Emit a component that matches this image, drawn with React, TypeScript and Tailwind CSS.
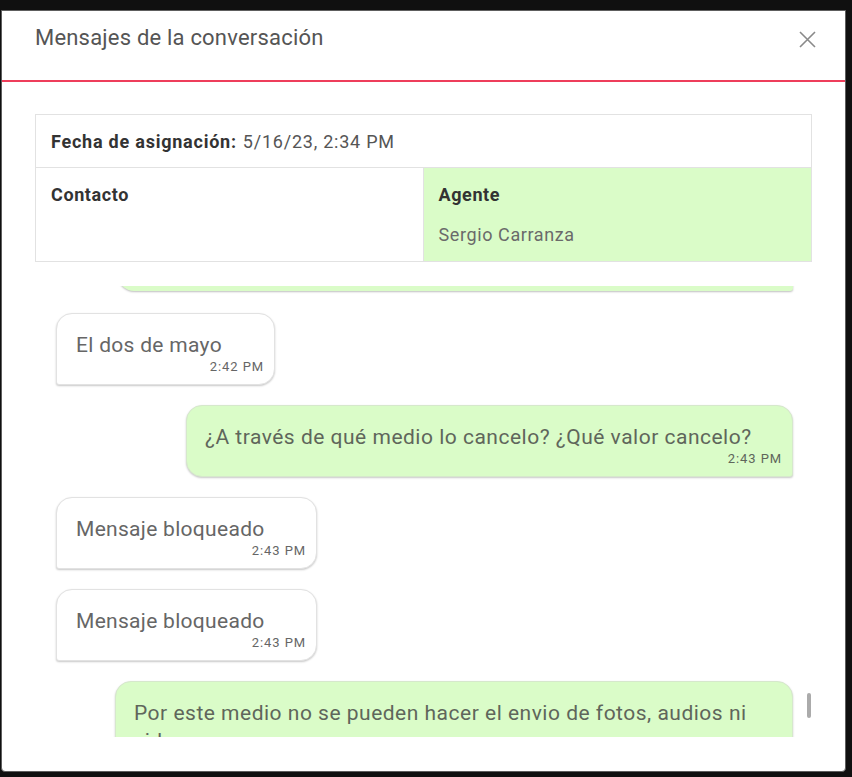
import React from "react";

function Received({ text, time, w }: { text: string; time: string; w: string }) {
  return (
    <div className={`self-start ${w} bg-white border border-[#e2e2e2] rounded-[16px] rounded-bl-[3px] shadow-[0_1px_2px_rgba(0,0,0,0.22)] pl-[19px] pr-[10px] pt-[17px] pb-[9px]`}>
      <div className="text-[21px] tracking-[0.3px] leading-[28px] text-[#666666]">{text}</div>
      <div className="text-[13px] tracking-[0.9px] leading-[16px] text-[#666666] text-right">{time}</div>
    </div>
  );
}

function Sent({ text, time, w }: { text: string; time: string; w: string }) {
  return (
    <div className={`self-end ${w} bg-[#dafcc8] border border-[#d6e8cc] rounded-[16px] rounded-br-[3px] shadow-[0_1px_2px_rgba(0,0,0,0.22)] pl-[18px] pr-[10px] pt-[17px] pb-[9px]`}>
      <div className="text-[21px] tracking-[0.5px] leading-[28px] text-[#5f665b] pr-[29px]">{text}</div>
      <div className="text-[13px] tracking-[0.9px] leading-[16px] text-[#5f665b] text-right">{time}</div>
    </div>
  );
}

export default function App() {
  return (
    <div className="min-h-screen bg-[#101010] pt-[10px] pl-[1px] font-['Roboto',sans-serif]">
      <div className="w-[845px] h-[762px] bg-white border border-[#5e5e5e] rounded-b-[4px] flex flex-col">
        <div className="h-[69px] flex justify-between items-start pl-[33px] pr-[29px] pt-[13px]">
          <div className="text-[22px] tracking-[0.2px] leading-[28px] text-[#555555]">Mensajes de la conversación</div>
          <svg width="17" height="17" viewBox="0 0 17 17" className="mt-[7px]">
            <path d="M1 1 L16 16 M16 1 L1 16" stroke="#8a8a8a" strokeWidth="1.6" fill="none" />
          </svg>
        </div>
        <div className="h-[2px] bg-[#ee3e5b]" />
        <div className="px-[33px] pt-[32px] flex flex-col">
          <div className="border border-[#e2e2e2]">
            <div className="h-[53px] flex items-center px-[15px] text-[18px] tracking-[0.77px] border-b border-[#e2e2e2]">
              <span className="font-bold text-[#333333]">Fecha de asignación:</span>
              <span className="text-[#555555] ml-[6px]">5/16/23, 2:34 PM</span>
            </div>
            <div className="grid grid-cols-2 h-[93px]">
              <div className="px-[15px] pt-[14px] border-r border-[#e2e2e2]">
                <div className="text-[18px] tracking-[0.6px] leading-[26px] font-bold text-[#333333]">Contacto</div>
              </div>
              <div className="px-[15px] pt-[14px] bg-[#dafcc8]">
                <div className="text-[18px] tracking-[0.6px] leading-[26px] font-bold text-[#333333]">Agente</div>
                <div className="text-[18px] tracking-[0.6px] leading-[26px] text-[#6a6a6a] mt-[14px]">Sergio Carranza</div>
              </div>
            </div>
          </div>
          <div className="relative mt-[24px] h-[451px] overflow-hidden">
            <div className="flex flex-col gap-[20px] pl-[21px] pr-[19px]">
              <div className="self-end w-[675px] h-[72px] -mt-[67px] mb-[2px] bg-[#dafcc8] rounded-[16px] rounded-br-[3px] shadow-[0_1px_2px_rgba(0,0,0,0.25)]" />
              <Received text="El dos de mayo" time="2:42 PM" w="w-[219px]" />
              <Sent text="¿A través de qué medio lo cancelo? ¿Qué valor cancelo?" time="2:43 PM" w="w-[607px]" />
              <Received text="Mensaje bloqueado" time="2:43 PM" w="w-[261px]" />
              <Received text="Mensaje bloqueado" time="2:43 PM" w="w-[261px]" />
              <Sent text="Por este medio no se pueden hacer el envio de fotos, audios ni videos" time="2:44 PM" w="w-[678px]" />
            </div>
            <div className="absolute right-[1px] top-[407px] w-[4px] h-[25px] rounded-[2px] bg-[#ababab]" />
          </div>
        </div>
      </div>
    </div>
  );
}
